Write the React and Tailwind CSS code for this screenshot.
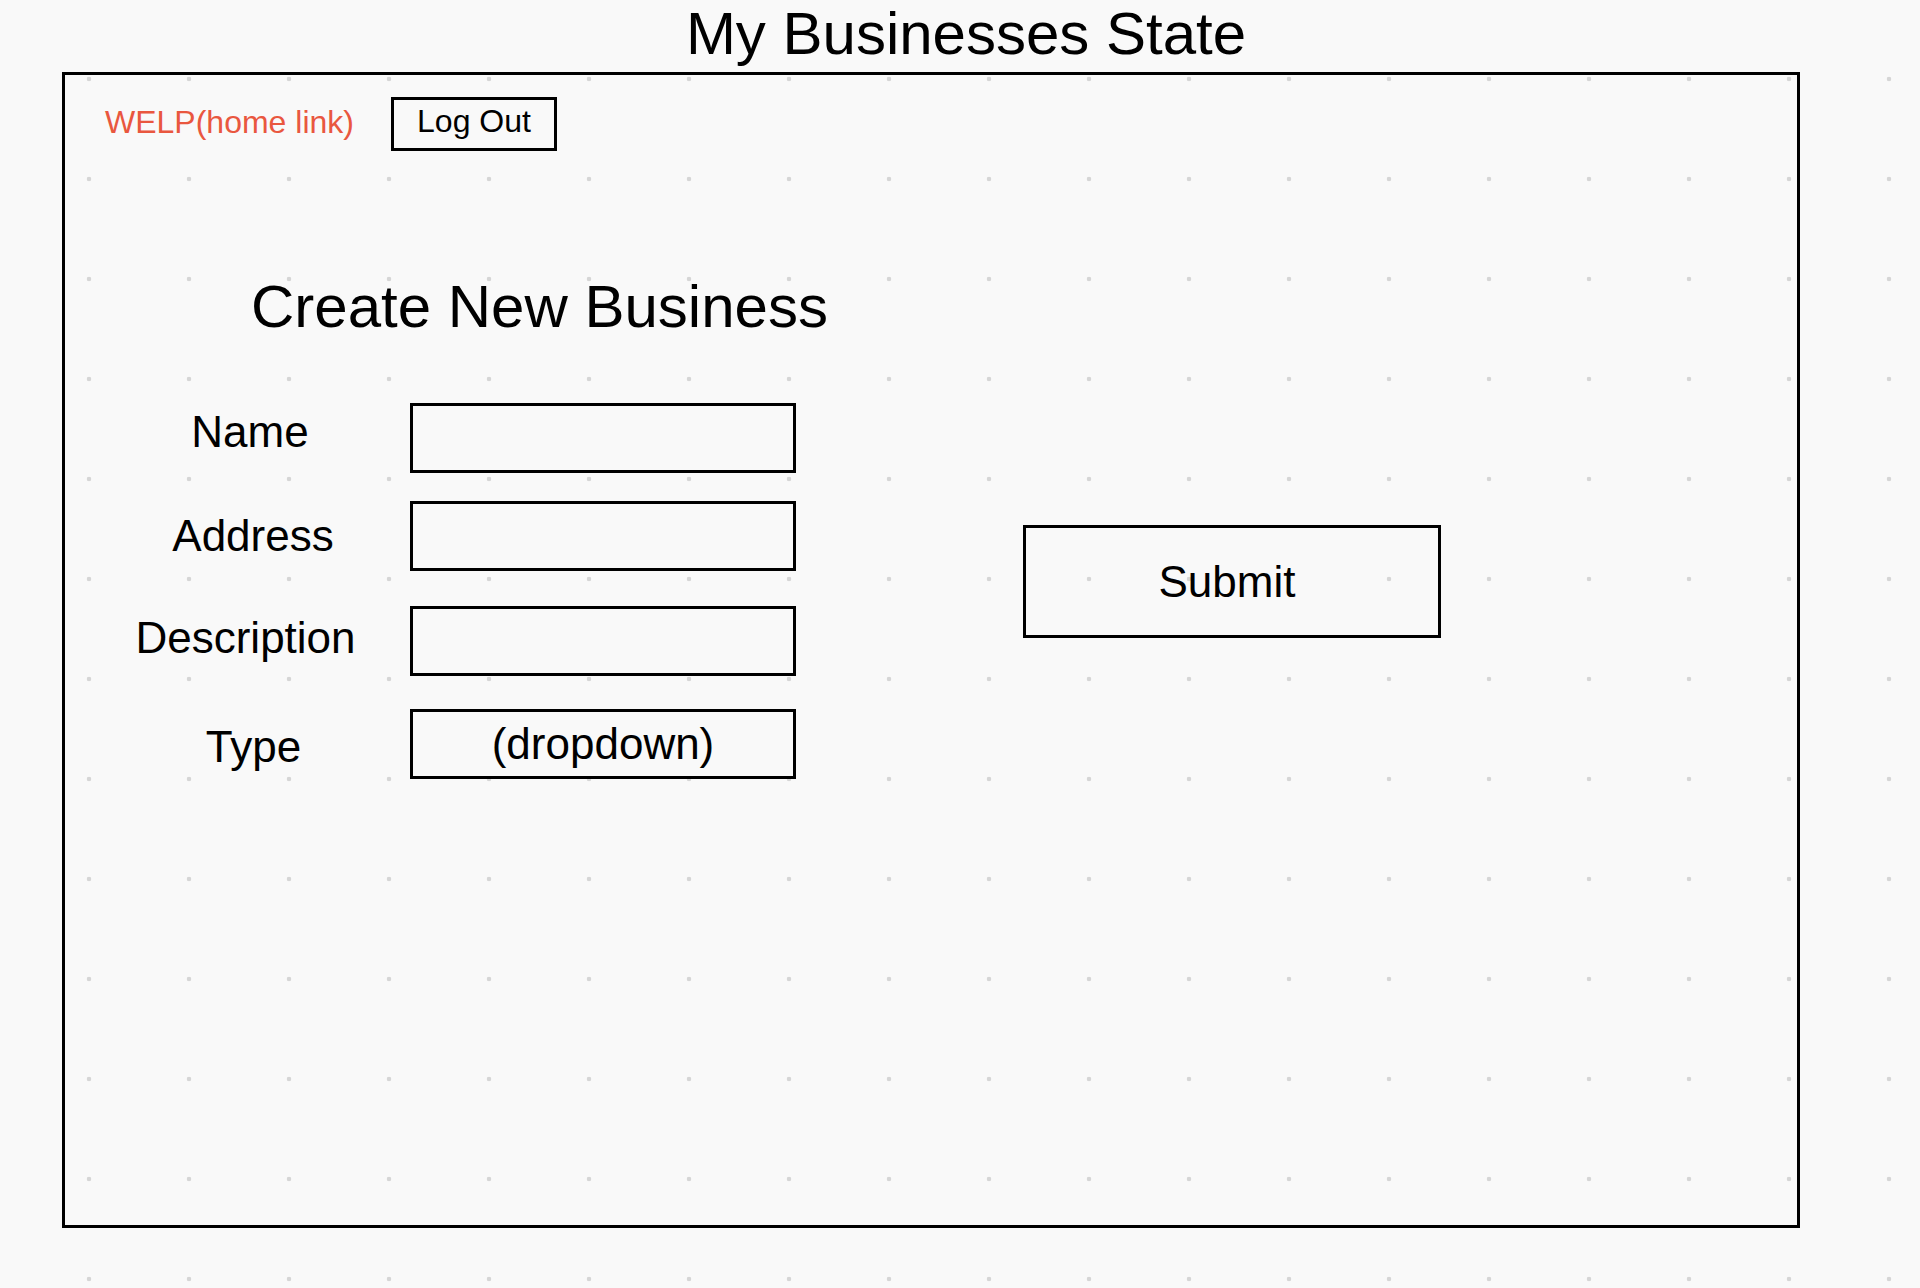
// Wireframe: "My Businesses State" - create new business form
const fields = [
  { label: 'Name', top: 'mt-0', labelFix: 'pb-[12px]' },
  { label: 'Address', top: 'mt-[28px]', labelFix: 'pl-[6px]' },
  { label: 'Description', top: 'mt-[35px]', labelFix: 'pb-[6px] pr-[9px]' },
  { label: 'Type', top: 'mt-[33px]', labelFix: 'pt-[6px] pl-[7px]', value: '(dropdown)' },
];

export default function App() {
  return (
    <div className="w-[1920px] h-[1288px] overflow-hidden bg-[#f9f9f9] bg-[radial-gradient(circle,#d6d6d6_2px,transparent_2.6px)] bg-size-[100px_100px] bg-position-[39px_29px] font-['Liberation_Sans',Arial,sans-serif] text-black">
      {/* Page title */}
      <h1 className="h-[72px] pl-[12px] text-center text-[60px] leading-[67px]">
        My Businesses State
      </h1>

      {/* Frame */}
      <div className="ml-[62px] w-[1738px] h-[1156px] border-[3px] border-black">
        {/* Top bar */}
        <div className="flex items-start pt-[22px] pl-[40px]">
          <a className="w-[286px] mt-[9px] text-[32px] leading-[32px] text-[#e9573f]">
            WELP(home link)
          </a>
          <button className="w-[166px] h-[54px] border-[3px] border-black pb-[6px] text-[32px] leading-[42px] text-center">
            Log Out
          </button>
        </div>

        <h2 className="ml-[186px] mt-[126px] text-[60px] leading-[60px]">Create New Business</h2>

        <div className="flex items-start mt-[66px] ml-[65px]">
          {/* Fields */}
          <div className="flex flex-col">
            {fields.map((f) => (
              <div key={f.label} className={`flex items-center ${f.top}`}>
                <div className={`w-[240px] text-center text-[44px] leading-[52px] ${f.labelFix}`}>
                  {f.label}
                </div>
                <div className="ml-[40px] w-[386px] h-[70px] border-[3px] border-black text-center text-[44px] leading-[64px]">
                  {f.value || ''}
                </div>
              </div>
            ))}
          </div>

          <button className="ml-[227px] mt-[122px] w-[418px] h-[113px] border-[3px] border-black pr-[10px] text-[44px] leading-[107px] text-center">
            Submit
          </button>
        </div>
      </div>
    </div>
  );
}
